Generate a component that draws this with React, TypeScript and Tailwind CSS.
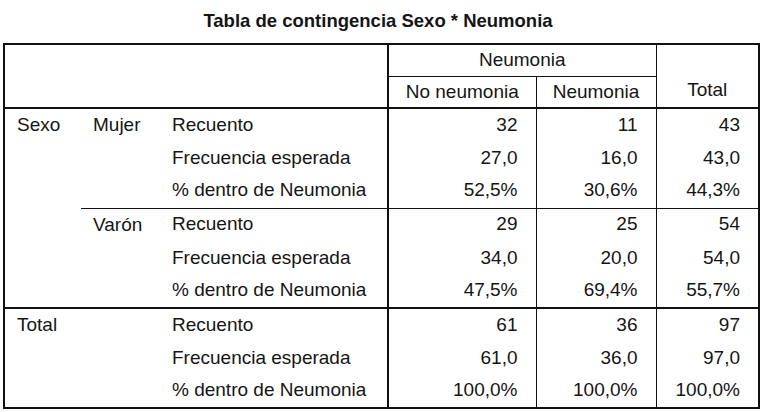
const rows = [
  {
    group: "Sexo",
    sub: "Mujer",
    lines: [
      ["Recuento", "32", "11", "43"],
      ["Frecuencia esperada", "27,0", "16,0", "43,0"],
      ["% dentro de Neumonia", "52,5%", "30,6%", "44,3%"],
    ],
  },
  {
    group: "",
    sub: "Varón",
    lines: [
      ["Recuento", "29", "25", "54"],
      ["Frecuencia esperada", "34,0", "20,0", "54,0"],
      ["% dentro de Neumonia", "47,5%", "69,4%", "55,7%"],
    ],
  },
  {
    group: "Total",
    sub: "",
    lines: [
      ["Recuento", "61", "36", "97"],
      ["Frecuencia esperada", "61,0", "36,0", "97,0"],
      ["% dentro de Neumonia", "100,0%", "100,0%", "100,0%"],
    ],
  },
];

const heights = ["h-[34px]", "h-[33px]", "h-[33px]"];

export default function App() {
  return (
    <div
      className="w-[764px] h-[412px] bg-white text-[#151515] overflow-hidden"
      style={{ fontFamily: '"Liberation Sans", Arial, sans-serif' }}
    >
      <div className="h-[43px] pt-[10px] text-center text-[18.5px] font-bold leading-[22px] pr-[8px]">
        Tabla de contingencia Sexo * Neumonia
      </div>
      <table className="ml-[3px] table-fixed border-collapse border-2 border-[#111] text-[19px] leading-none">
        <colgroup>
          <col className="w-[77px]" />
          <col className="w-[79px]" />
          <col className="w-[228px]" />
          <col className="w-[148px]" />
          <col className="w-[120px]" />
          <col className="w-[103px]" />
        </colgroup>
        <thead>
          <tr className="h-[32px]">
            <th colSpan={3} rowSpan={2} className="border-r-2 border-b-2 border-[#111]"></th>
            <th colSpan={2} className="font-normal text-center border-b border-[#111] pb-[2px]">
              Neumonia
            </th>
            <th rowSpan={2} className="font-normal text-center align-bottom pb-[8px] border-l border-b-2 border-[#111]">
              Total
            </th>
          </tr>
          <tr className="h-[32px]">
            <th className="font-normal text-center border-r border-b-2 border-[#111]">No neumonia</th>
            <th className="font-normal text-center border-b-2 border-[#111]">Neumonia</th>
          </tr>
        </thead>
        <tbody>
          {rows.map((g, gi) =>
            g.lines.map((l, li) => (
              <tr key={`${gi}-${li}`} className={heights[li]}>
                {li === 0 && gi !== 1 && (
                  <td
                    rowSpan={gi === 0 ? 6 : 3}
                    colSpan={gi === 2 ? 2 : 1}
                    className={`align-top pt-[6px] pl-[12px] ${gi === 2 ? "border-t-2 border-[#111]" : ""}`}
                  >
                    {g.group}
                  </td>
                )}
                {li === 0 && gi !== 2 && (
                  <td
                    rowSpan={3}
                    className={`align-top pt-[6px] pl-[12px] ${gi === 1 ? "border-t border-[#111]" : ""}`}
                  >
                    {g.sub}
                  </td>
                )}
                <td
                  className={`pl-[12px] pb-[3px] border-r-2 border-[#111] ${
                    li === 0 && gi === 1 ? "border-t" : li === 0 && gi === 2 ? "border-t-2" : ""
                  }`}
                >
                  {l[0]}
                </td>
                {l.slice(1).map((v, vi) => (
                  <td
                    key={vi}
                    className={`text-right pr-[18px] pb-[3px] border-[#111] ${vi < 2 ? "border-r" : ""} ${
                      li === 0 && gi === 1 ? "border-t" : li === 0 && gi === 2 ? "border-t-2" : ""
                    }`}
                  >
                    {v}
                  </td>
                ))}
              </tr>
            ))
          )}
        </tbody>
      </table>
    </div>
  );
}
